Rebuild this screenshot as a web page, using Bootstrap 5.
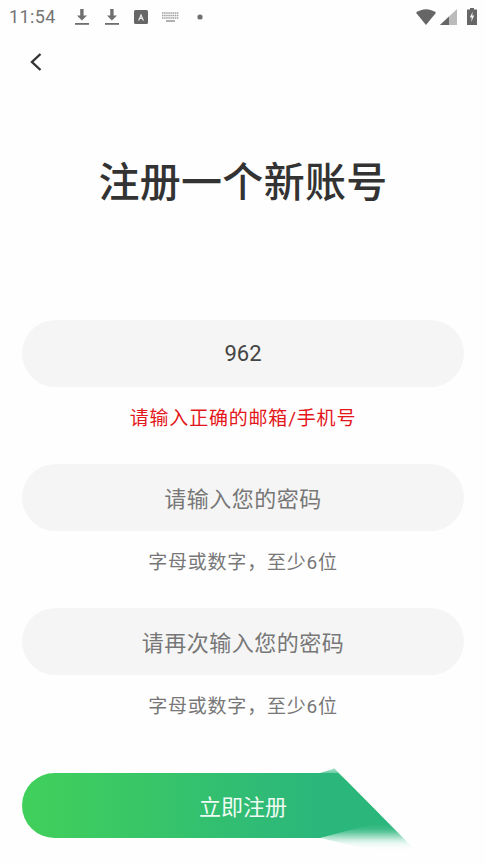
<!DOCTYPE html>
<html lang="zh"><head><meta charset="utf-8">
<link rel="stylesheet" href="https://cdn.jsdelivr.net/npm/bootstrap@5.3.0/dist/css/bootstrap.min.css">
<style>
html,body{height:864px;overflow:hidden;background:#fefefe;}
body{font-family:Roboto,"Noto Sans CJK SC",sans-serif;color:#333;}
.sbar{height:33px;padding:0 9px 0 9px;color:#777;}
.sbar-time{font-size:18px;letter-spacing:.4px;width:57px;color:#757575;}
.sbar-gap{gap:14px;margin-left:8px;}
.sbar-batt{margin-left:6px;}
.topnav{height:58px;padding-left:27px;}
.heading{font-size:41px;font-weight:500;letter-spacing:.3px;color:#333;margin:0;height:62px;line-height:62px;margin-top:57px;font-family:"Noto Sans CJK SC",sans-serif;}
.formwrap{margin-top:110px;padding:0 22px;}
.pill{height:67px;border-radius:34px;background:#f5f5f5;border:0;font-size:22px;color:#444;text-align:center;width:100%;outline:0;display:block;}
.pill::placeholder{color:#777;opacity:1;letter-spacing:.5px;}
.pill-ph{padding-top:4px;}
.hint{height:77px;line-height:64px;font-size:19px;letter-spacing:.8px;text-align:center;color:#777;margin:0;padding-bottom:13px;}
.hint-err{color:#e3171b;}
.go-wrap{position:relative;margin-top:21px;height:65px;}
.go-btn{width:298px;height:65px;border:0;border-radius:33px 0 0 33px;background:linear-gradient(90deg,#41d05a,#2bb67c);position:absolute;left:0;top:0;}
.go-label{position:absolute;left:0;top:0;width:442px;height:65px;line-height:65px;text-align:center;color:#f0fbf3;font-size:22px;font-family:"Noto Sans CJK SC",sans-serif;font-weight:400;}
.go-tail{position:absolute;left:298px;top:-5px;}
</style></head>
<body>
<div class="sbar d-flex align-items-center">
  <span class="sbar-time">11:54</span>
  <div class="d-flex align-items-center sbar-gap">
    <svg width="16" height="18" viewBox="0 0 16 18"><path d="M6.200 1h3.400v6.500H13L7.900 12.600 3 7.500h3.200z" fill="#6f6f6f"/><rect x="1" y="15" width="14" height="1.800" fill="#6f6f6f"/></svg>
    <svg width="16" height="18" viewBox="0 0 16 18"><path d="M6.200 1h3.400v6.500H13L7.900 12.600 3 7.500h3.200z" fill="#6f6f6f"/><rect x="1" y="15" width="14" height="1.800" fill="#6f6f6f"/></svg>
    <svg width="14" height="14" viewBox="0 0 14 14"><rect width="14" height="14" rx="1.500" fill="#666"/><path d="M4 10.500 7 3.500l3 7H8.700L8 9H6l-.7 1.500zM6.500 7.800h1L7 6.300z" fill="#eee"/></svg>
    <svg width="17" height="10" viewBox="0 0 17 10"><path d="M0 1h17M0 3.500h17M0 6h17" stroke="#a0a0a0" stroke-width="1.700" stroke-dasharray="1.500 .6"/><rect x="4" y="8" width="9" height="2" fill="#b0b0b0"/></svg>
    <svg class="ms-1" width="6" height="6" viewBox="0 0 6 6"><circle cx="3" cy="3" r="2.600" fill="#6f6f6f"/></svg>
  </div>
  <div class="d-flex align-items-center ms-auto gap-1">
    <svg width="20" height="16" viewBox="0 0 20 16"><path d="M0 3.800C5.500-1.100 14.500-1.100 20 3.800L10 16z" fill="#666"/></svg>
    <svg width="17" height="16" viewBox="0 0 17 16"><path d="M0 16 17 0v16z" fill="#bbb"/><path d="M0 16 9 7.500V16z" fill="#666"/></svg>
    <svg class="sbar-batt" width="10" height="17" viewBox="0 0 10 17"><path d="M3 0h4v1.500h3V17H0V1.500h3z" fill="#666"/><path d="M5.800 3.500 2.800 9.500h2l-.6 4.500 3-6.500h-2z" fill="#f2f2f2"/></svg>
  </div>
</div>
<div class="topnav d-flex align-items-center">
  <svg width="20" height="24" viewBox="0 0 20 24"><path d="M13.500 4 5 12l8.500 8" fill="none" stroke="#333" stroke-width="2.400"/></svg>
</div>
<h1 class="heading text-center">注册一个新账号</h1>
<form class="formwrap">
  <input class="pill" value="962" type="text">
  <p class="hint hint-err">请输入正确的邮箱/手机号</p>
  <input class="pill pill-ph" placeholder="请输入您的密码" type="text">
  <p class="hint">字母或数字，至少6位</p>
  <input class="pill pill-ph" placeholder="请再次输入您的密码" type="text">
  <p class="hint">字母或数字，至少6位</p>
  <div class="go-wrap">
    <div class="go-btn"></div>
    <svg class="go-tail" width="110" height="95" viewBox="0 0 110 95">
      <defs>
        <clipPath id="dg"><polygon points="0,5 13,1 14,0 108,95 0,70"/></clipPath>
        <filter id="sf" x="-20%" y="-20%" width="140%" height="140%"><feGaussianBlur stdDeviation="6"/></filter>
      </defs>
      <g clip-path="url(#dg)">
        <polygon points="-10,2 18,2 120,2 120,68 0,68" fill="#2bb67c" filter="url(#sf)"/>
        <polygon points="0,5 18,5 60,47 60,54 0,70" fill="#2bb67c"/>
      </g>
    </svg>
    <span class="go-label">立即注册</span>
  </div>
</form>
</body></html>
